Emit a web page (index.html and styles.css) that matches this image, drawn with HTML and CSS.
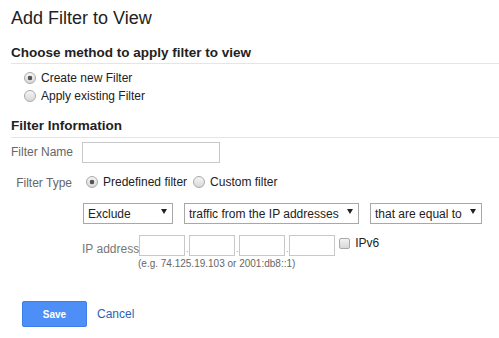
FILE: index.html
```html
<!DOCTYPE html>
<html lang="en">
<head>
    <meta charset="UTF-8">
    <meta name="viewport" content="width=device-width, initial-scale=1.0">
    <title>Add Filter to View</title>
    <link rel="stylesheet" href="styles.css">
</head>
<body>
    <div class="page">
        <h1 class="title">Add Filter to View</h1>

        <h2 class="section-head">Choose method to apply filter to view</h2>
        <div class="method-list">
            <label class="radio-row"><span class="radio checked"></span>Create new Filter</label>
            <label class="radio-row"><span class="radio"></span>Apply existing Filter</label>
        </div>

        <h2 class="section-head info-head">Filter Information</h2>
        <div class="form-row">
            <span class="field-label">Filter Name</span>
            <input type="text" class="text-input name-input">
        </div>
        <div class="form-row type-row">
            <span class="field-label">Filter Type</span>
            <div class="type-options">
                <label class="radio-option"><span class="radio checked"></span>Predefined filter</label>
                <label class="radio-option"><span class="radio"></span>Custom filter</label>
            </div>
        </div>

        <div class="select-row">
            <div class="dropdown exclude-select"><span>Exclude</span><span class="arrow"></span></div>
            <div class="dropdown source-select"><span>traffic from the IP addresses</span><span class="arrow"></span></div>
            <div class="dropdown match-select"><span>that are equal to</span><span class="arrow"></span></div>
        </div>

        <div class="ip-row">
            <span class="ip-label">IP address</span>
            <input type="text" class="text-input ip-box">
            <span class="ip-dot">.</span>
            <input type="text" class="text-input ip-box">
            <span class="ip-dot">.</span>
            <input type="text" class="text-input ip-box">
            <span class="ip-dot">.</span>
            <input type="text" class="text-input ip-box">
            <label class="ipv6"><span class="checkbox"></span>IPv6</label>
        </div>
        <div class="ip-hint">(e.g. 74.125.19.103 or 2001:db8::1)</div>

        <div class="actions">
            <button class="save-btn">Save</button>
            <a class="cancel-link">Cancel</a>
        </div>
    </div>
</body>
</html>
```

FILE: styles.css
```css
body {
    margin: 0;
    background: #fff;
    color: #222;
    font-family: "Liberation Sans", Arial, sans-serif;
}

.page {
    padding: 7px 0 0 11px;
}

.title {
    margin: 0;
    font-size: 18px;
    line-height: 22px;
    font-weight: normal;
    color: #222;
}

.section-head {
    margin: 16px 0 0;
    padding-bottom: 2px;
    border-bottom: 1px solid #e5e5e5;
    font-size: 13.5px;
    line-height: 16px;
    font-weight: bold;
    color: #222;
}

.info-head {
    margin-top: 13px;
    padding-bottom: 3px;
}

.method-list {
    margin-top: 5px;
}

.radio-row {
    display: flex;
    align-items: center;
    gap: 5px;
    height: 18px;
    margin-left: 13px;
    font-size: 12px;
}

.radio {
    flex: none;
    width: 12px;
    height: 12px;
    box-sizing: border-box;
    border: 1px solid #a9a9a9;
    border-radius: 50%;
    background: linear-gradient(#f5f5f5, #d8d8d8);
}

.radio.checked {
    background: radial-gradient(circle, #555 0 2px, transparent 2.6px), linear-gradient(#f5f5f5, #d8d8d8);
}

.form-row {
    display: flex;
    align-items: flex-start;
    margin-top: 4px;
}

.type-row {
    margin-top: 10px;
}

.field-label {
    flex: none;
    width: 61px;
    margin-right: 10px;
    padding-top: 2px;
    text-align: right;
    white-space: nowrap;
    font-size: 12px;
    line-height: 17px;
    color: #666;
}

.text-input {
    flex: none;
    box-sizing: border-box;
    height: 21px;
    margin: 0;
    padding: 0 4px;
    border: 1px solid #c8c8c8;
    background: #fff;
}

.name-input {
    width: 138px;
}

.type-options {
    display: flex;
    align-items: center;
    gap: 6px;
    height: 18px;
    padding-left: 4px;
    font-size: 12px;
}

.radio-option {
    display: flex;
    align-items: center;
    gap: 5px;
}

.select-row {
    display: flex;
    gap: 11px;
    margin: 11px 0 0 72px;
}

.dropdown {
    display: flex;
    align-items: center;
    justify-content: space-between;
    box-sizing: border-box;
    height: 21px;
    padding: 0 5px 0 4px;
    border: 1px solid #a8a8a8;
    background: #fff;
    font-size: 12px;
    color: #222;
    white-space: nowrap;
}

.exclude-select {
    width: 90px;
}

.source-select {
    width: 175px;
}

.match-select {
    width: 112px;
}

.arrow {
    width: 0;
    height: 0;
    margin-bottom: 4px;
    border-left: 3px solid transparent;
    border-right: 3px solid transparent;
    border-top: 5px solid #222;
}

.ip-row {
    display: flex;
    align-items: flex-end;
    margin: 11px 0 0 71px;
}

.ip-label {
    flex: none;
    white-space: nowrap;
    font-size: 12px;
    line-height: 14px;
    color: #777;
}

.ip-box {
    width: 46px;
}

.ip-dot {
    width: 4px;
    margin-bottom: 2px;
    text-align: center;
    font-size: 9px;
    line-height: 10px;
    color: #999;
}

.ipv6 {
    display: flex;
    align-items: center;
    gap: 5px;
    align-self: flex-start;
    margin: 1px 0 0 4px;
    font-size: 12px;
    line-height: 14px;
    color: #222;
}

.checkbox {
    width: 11px;
    height: 11px;
    box-sizing: border-box;
    border: 1px solid #a9a9a9;
    border-radius: 2px;
    background: linear-gradient(#f2f2f2, #d8d8d8);
}

.ip-hint {
    margin: 2px 0 0 127px;
    font-size: 10px;
    line-height: 12px;
    color: #666;
}

.actions {
    display: flex;
    align-items: center;
    gap: 10px;
    margin: 31px 0 0 11px;
}

.save-btn {
    width: 65px;
    height: 26px;
    padding: 0;
    border: 1px solid #3a7ee8;
    border-radius: 2px;
    background: #4d8ff7;
    color: #fff;
    font-family: "Liberation Sans", Arial, sans-serif;
    font-size: 10px;
    font-weight: bold;
    cursor: pointer;
}

.cancel-link {
    font-size: 12px;
    color: #2c64b3;
    text-decoration: none;
    cursor: pointer;
}
```
